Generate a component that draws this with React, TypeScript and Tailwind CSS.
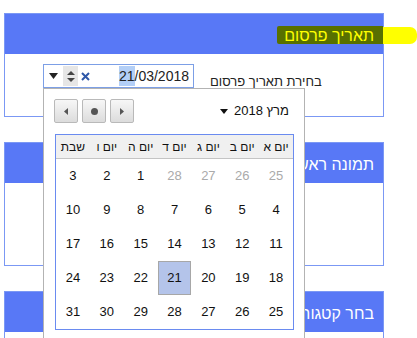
import React from 'react';

const weekDays = ['יום א', 'יום ב', 'יום ג', 'יום ד', 'יום ה', 'יום ו', 'שבת'];

const weeks: { day: number; muted?: boolean }[][] = [
  [{ day: 25, muted: true }, { day: 26, muted: true }, { day: 27, muted: true }, { day: 28, muted: true }, { day: 1 }, { day: 2 }, { day: 3 }],
  [4, 5, 6, 7, 8, 9, 10].map((d) => ({ day: d })),
  [11, 12, 13, 14, 15, 16, 17].map((d) => ({ day: d })),
  [18, 19, 20, 21, 22, 23, 24].map((d) => ({ day: d })),
  [25, 26, 27, 28, 29, 30, 31].map((d) => ({ day: d })),
];

const Panel: React.FC<{ title: string; bodyHeight: string; titleClass?: string; children?: React.ReactNode }> = ({
  title,
  bodyHeight,
  titleClass = 'text-white',
  children,
}) => (
  <div className="border border-[#7b98f4] bg-white">
    <div dir="rtl" className="h-[40px] bg-[#5878f6] flex items-center pr-[9px] pt-[3px] text-[16px]">
      <span className={`relative z-[1] ${titleClass}`}>{title}</span>
    </div>
    <div className={bodyHeight}>{children}</div>
  </div>
);

const NavButton: React.FC<{ children: React.ReactNode }> = ({ children }) => (
  <div className="w-[24px] h-[24px] rounded-[2px] border border-[#b9b9b9] bg-gradient-to-b from-[#f7f7f7] to-[#dcdcdc] flex items-center justify-center">
    {children}
  </div>
);

const DatePopup: React.FC = () => (
  <div dir="ltr" className="absolute left-0 top-full w-[262px] h-[260px] bg-white border border-[#b3b3b3] z-10">
    <div className="flex items-center justify-between pl-[10px] pr-[15px] pt-[10px]">
      <div className="flex gap-[4px]">
        <NavButton>
          <svg width="4" height="7" viewBox="0 0 4 7"><path d="M4 0 L0 3.5 L4 7 Z" fill="#555" /></svg>
        </NavButton>
        <NavButton>
          <div className="w-[7px] h-[7px] rounded-full bg-[#555]" />
        </NavButton>
        <NavButton>
          <svg width="4" height="7" viewBox="0 0 4 7"><path d="M0 0 L4 3.5 L0 7 Z" fill="#555" /></svg>
        </NavButton>
      </div>
      <div dir="rtl" className="flex items-center gap-[6px] text-[13px] text-[#111]">
        <span>מרץ 2018</span>
        <svg width="8" height="5" viewBox="0 0 8 5"><path d="M0 0 L8 0 L4 5 Z" fill="#111" /></svg>
      </div>
    </div>

    <div dir="rtl" className="mt-[11px] ml-[11px] mr-[10px] border border-[#6a8bf0]">
      <div className="grid grid-cols-7 h-[24px] bg-[#f0f0f0] border-b border-[#c4c4c4] text-[12px] text-[#111]">
        {weekDays.map((d) => (
          <div key={d} className="flex items-center justify-center">{d}</div>
        ))}
      </div>
      {weeks.map((week, i) => (
        <div key={i} className="grid grid-cols-7 h-[34px] text-[13px]">
          {week.map((c) => (
            <div
              key={c.day + '-' + c.muted}
              className={
                c.day === 21
                  ? 'flex items-center justify-center bg-[#b4c4ea] border border-[#a7a7a7] text-[#111]'
                  : `flex items-center justify-center ${c.muted ? 'text-[#aaaaaa]' : 'text-[#111]'}`
              }
            >
              {c.day}
            </div>
          ))}
        </div>
      ))}
    </div>
  </div>
);

export default function App() {
  return (
    <div className="relative w-[417px] h-[338px] overflow-hidden bg-white font-['Liberation_Sans',Arial,sans-serif]">
      {/* marker highlight over the first title */}
      <div className="absolute left-[277px] top-[26px] w-[106px] h-[18px] bg-[#587000] rounded-l-[2px]" />
      <div className="absolute left-[383px] top-[27px] w-[34px] h-[17px] bg-[#ffff00] rounded-r-[7px]" />

      <div className="flex flex-col gap-[25px] pl-[4px] pt-[13px] w-[384px]">
        <Panel title="תאריך פרסום" bodyHeight="h-[62px]" titleClass="text-[#ffff00]">
          <div className="flex items-start pl-[38px] pt-[10px] gap-[16px]">
            <div className="relative">
              <div className="flex items-center w-[151px] h-[24px] border border-[#7c9fe6] bg-white">
                <svg className="ml-[5px]" width="9" height="6" viewBox="0 0 9 6"><path d="M0 0 L9 0 L4.5 6 Z" fill="#222" /></svg>
                <div className="ml-[5px] w-[15px] h-[20px] bg-[#e6e6e6] flex flex-col items-center justify-center gap-[3px]">
                  <svg width="8" height="4" viewBox="0 0 8 4"><path d="M0 4 L4 0 L8 4 Z" fill="#444" /></svg>
                  <svg width="8" height="4" viewBox="0 0 8 4"><path d="M0 0 L8 0 L4 4 Z" fill="#444" /></svg>
                </div>
                <svg className="ml-[3px]" width="9" height="9" viewBox="0 0 9 9">
                  <path d="M1 1 L8 8 M8 1 L1 8" stroke="#2e57a8" strokeWidth="2" />
                </svg>
                <div className="ml-auto mr-[4px] text-[14px] text-[#222] flex items-center">
                  <span className="bg-[#b3cff7] h-[20px] flex items-center">21</span>
                  <span>/03/2018</span>
                </div>
              </div>
              <DatePopup />
            </div>
            <span dir="rtl" className="text-[13px] text-[#222] pt-[8px] whitespace-nowrap">
              בחירת תאריך פרסום
            </span>
          </div>
        </Panel>
        <Panel title="תמונה ראשית" bodyHeight="h-[82px]" />
        <Panel title="בחר קטגוריה" bodyHeight="h-[40px]" />
      </div>
    </div>
  );
}
